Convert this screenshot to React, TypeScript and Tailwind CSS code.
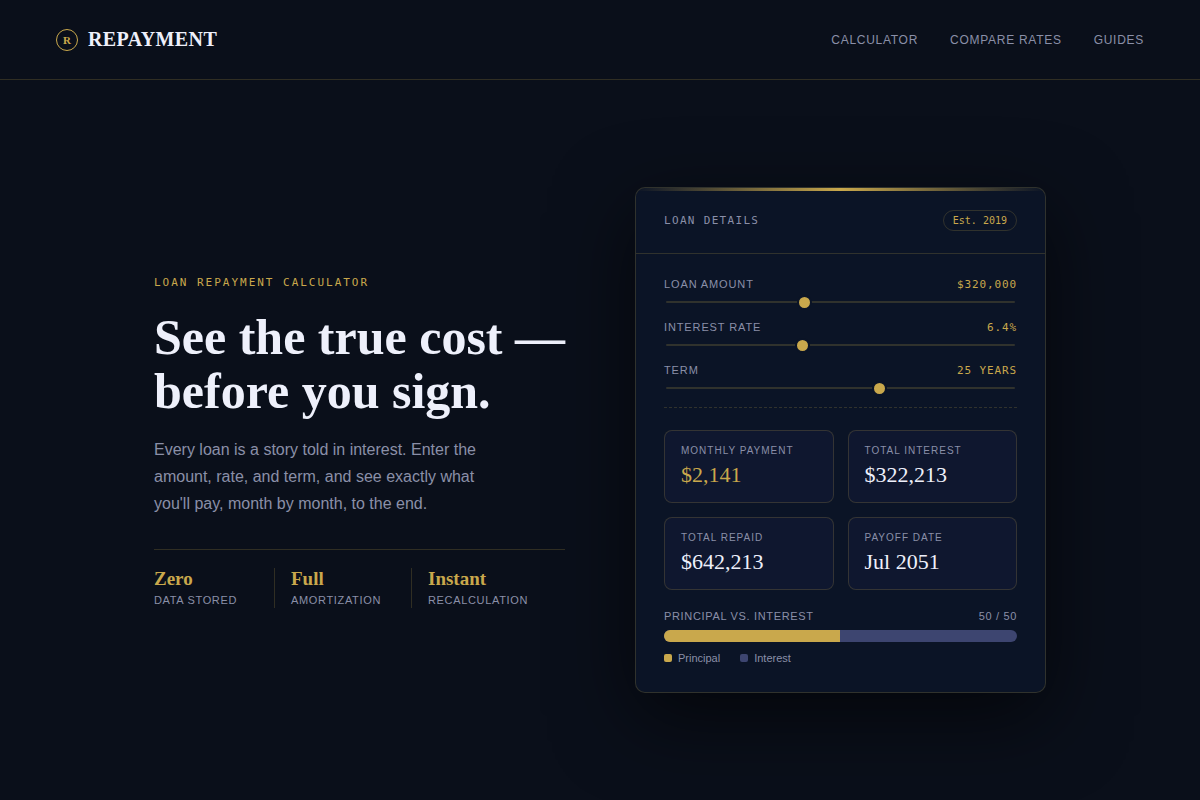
import { useId, useState } from 'react'

const NAV_LINKS = ['Calculator', 'Compare rates', 'Guides']

const FEATURES = [
    { title: 'Zero', caption: 'Data stored' },
    { title: 'Full', caption: 'Amortization' },
    { title: 'Instant', caption: 'Recalculation' },
]

const MONTHS = ['Jan', 'Feb', 'Mar', 'Apr', 'May', 'Jun', 'Jul', 'Aug', 'Sep', 'Oct', 'Nov', 'Dec']
const START_YEAR = 2026
const START_MONTH = 6

const money = (value: number) => `$${Math.round(value).toLocaleString('en-US')}`

const calculate = (amount: number, rate: number, years: number) => {
    const months = years * 12
    const monthlyRate = rate / 100 / 12
    const payment = (amount * monthlyRate) / (1 - Math.pow(1 + monthlyRate, -months))
    const total = payment * months
    return {
        payment,
        total,
        interest: total - amount,
        principalShare: (amount / total) * 100,
        payoff: `${MONTHS[START_MONTH]} ${START_YEAR + years}`,
    }
}

const Header = () => (
    <header className="flex items-center justify-between border-b border-[#c9a84c]/20 px-14 pt-6 pb-6">
        <a href="#" className="flex items-center gap-2.5">
            <span className="flex size-[22px] items-center justify-center rounded-full border border-[#c9a84c] pt-px font-['Liberation_Serif',serif] text-[11px] font-bold text-[#c9a84c]">
                R
            </span>
            <span className="font-['Liberation_Serif',serif] text-xl leading-[31px] font-bold tracking-[0.02em] text-[#eef0fb] uppercase">
                Repayment
            </span>
        </a>
        <nav className="flex gap-8">
            {NAV_LINKS.map((link) => (
                <a key={link} href="#" className="text-xs tracking-[0.06em] text-[#8a8fa8] uppercase hover:text-[#c9a84c]">
                    {link}
                </a>
            ))}
        </nav>
    </header>
)

const Intro = () => (
    <section>
        <p className="font-['DejaVu_Sans_Mono',monospace] text-[11px] leading-[22px] tracking-[0.18em] text-[#c9a84c] uppercase">
            Loan repayment calculator
        </p>
        <h1 className="mt-4 font-['Liberation_Serif',serif] text-[50px] leading-[54px] font-bold text-[#eef0fb]">
            See the true cost — before you sign.
        </h1>
        <p className="mt-[18px] max-w-[340px] text-base leading-[27px] text-[#8a8fa8]">
            Every loan is a story told in interest. Enter the amount, rate, and term, and see exactly what you'll pay,
            month by month, to the end.
        </p>
        <ul className="mt-8 grid grid-cols-3 border-t border-[#c9a84c]/20 pt-[18px]">
            {FEATURES.map(({ title, caption }) => (
                <li key={title} className="mr-4 border-r border-[#c9a84c]/20 last:mr-0 last:border-r-0">
                    <p className="font-['Liberation_Serif',serif] text-[19px] leading-[22px] font-bold text-[#c9a84c]">{title}</p>
                    <p className="mt-0.5 text-[11px] leading-4 tracking-[0.06em] text-[#8a8fa8] uppercase">{caption}</p>
                </li>
            ))}
        </ul>
    </section>
)

interface SliderProps {
    label: string
    display: string
    value: number
    min: number
    max: number
    step: number
    onChange: (value: number) => void
}

const Slider = ({ label, display, value, min, max, step, onChange }: SliderProps) => {
    const id = useId()
    return (
        <div>
            <div className="flex items-center justify-between">
                <label htmlFor={id} className="text-[11px] leading-4 tracking-[0.08em] text-[#8a8fa8] uppercase">
                    {label}
                </label>
                <output
                    htmlFor={id}
                    className="pt-px font-['DejaVu_Sans_Mono',monospace] text-[11px] leading-[15px] tracking-[0.08em] text-[#c9a84c] uppercase"
                >
                    {display}
                </output>
            </div>
            <div className="mt-0.5 px-0.5">
                <input
                    id={id}
                    type="range"
                    min={min}
                    max={max}
                    step={step}
                    value={value}
                    onChange={(event) => onChange(Number(event.target.value))}
                    className="block h-4 w-full cursor-pointer appearance-none bg-transparent [&::-webkit-slider-runnable-track]:h-0.5 [&::-webkit-slider-runnable-track]:rounded-full [&::-webkit-slider-runnable-track]:bg-[#c9a84c]/20 [&::-webkit-slider-thumb]:-mt-1.5 [&::-webkit-slider-thumb]:size-[15px] [&::-webkit-slider-thumb]:appearance-none [&::-webkit-slider-thumb]:rounded-full [&::-webkit-slider-thumb]:border-2 [&::-webkit-slider-thumb]:border-[#0b1426] [&::-webkit-slider-thumb]:bg-[#c9a84c]"
                />
            </div>
        </div>
    )
}

const Stat = ({ label, value, highlight = false }: { label: string; value: string; highlight?: boolean }) => (
    <div className="rounded-lg border border-[#c9a84c]/20 bg-[#0f172f] px-4 py-3">
        <dt className="text-[10px] leading-4 tracking-[0.1em] text-[#8a8fa8] uppercase">{label}</dt>
        <dd
            className={`mt-0.5 pb-0.5 font-['Liberation_Serif',serif] text-[22px] leading-[27px] ${highlight ? 'text-[#c9a84c]' : 'text-[#eef0fb]'}`}
        >
            {value}
        </dd>
    </div>
)

const LoanCard = () => {
    const [amount, setAmount] = useState(320000)
    const [rate, setRate] = useState(6.4)
    const [years, setYears] = useState(25)
    const result = calculate(amount, rate, years)
    const principal = Math.round(result.principalShare)

    return (
        <section className="relative overflow-hidden rounded-[10px] border border-[#c9a84c]/20 bg-[#0b1426] shadow-[0_24px_80px_rgba(0,0,0,0.6)]">
            <div className="absolute inset-x-0 top-0 h-[3px] bg-linear-to-r from-transparent via-[#c9a84c] to-transparent" />
            <div className="flex items-center justify-between border-b border-[#c9a84c]/20 px-7 py-[22px]">
                <h2 className="pt-px font-['DejaVu_Sans_Mono',monospace] text-[11px] leading-4 tracking-[0.12em] text-[#8a8fa8] uppercase">
                    Loan details
                </h2>
                <span className="rounded-full border border-[#c9a84c]/20 px-[9px] font-['DejaVu_Sans_Mono',monospace] text-[10px] leading-[19px] text-[#c9a84c]">
                    Est. 2019
                </span>
            </div>

            <div className="px-7 pt-[22px] pb-[26px]">
                <div className="flex flex-col gap-[9px] border-b border-dashed border-[#c9a84c]/20 pb-[11px]">
                    <Slider label="Loan amount" display={money(amount)} value={amount} min={10000} max={800000} step={5000} onChange={setAmount} />
                    <Slider label="Interest rate" display={`${rate}%`} value={rate} min={1} max={15} step={0.1} onChange={setRate} />
                    <Slider label="Term" display={`${years} years`} value={years} min={1} max={40} step={1} onChange={setYears} />
                </div>

                <dl className="mt-[22px] grid grid-cols-2 gap-3.5">
                    <Stat label="Monthly payment" value={money(result.payment)} highlight />
                    <Stat label="Total interest" value={money(result.interest)} />
                    <Stat label="Total repaid" value={money(result.total)} />
                    <Stat label="Payoff date" value={result.payoff} />
                </dl>

                <div className="mt-[18px] flex justify-between text-[11px] leading-4 tracking-[0.06em] text-[#8a8fa8]">
                    <span className="uppercase">Principal vs. interest</span>
                    <span>
                        {principal} / {100 - principal}
                    </span>
                </div>
                <div className="mt-1.5 h-3 overflow-hidden rounded-full bg-[#3d4570]">
                    <div className="h-full bg-[#c9a84c]" style={{ width: `${result.principalShare}%` }} />
                </div>
                <ul className="mt-2 flex gap-5 text-[11px] leading-4 text-[#8a8fa8]">
                    <li className="flex items-center gap-1.5">
                        <span className="size-2 rounded-xs bg-[#c9a84c]" />
                        Principal
                    </li>
                    <li className="flex items-center gap-1.5">
                        <span className="size-2 rounded-xs bg-[#3d4570]" />
                        Interest
                    </li>
                </ul>
            </div>
        </section>
    )
}

export default function App() {
    return (
        <div className="flex min-h-screen flex-col bg-[#0a0f1a] font-['Liberation_Sans',Arial,sans-serif]">
            <Header />
            <main className="flex flex-1 items-center justify-center px-6">
                <div className="grid w-full max-w-[892px] items-center gap-[70px] md:grid-cols-2">
                    <Intro />
                    <LoanCard />
                </div>
            </main>
        </div>
    )
}
